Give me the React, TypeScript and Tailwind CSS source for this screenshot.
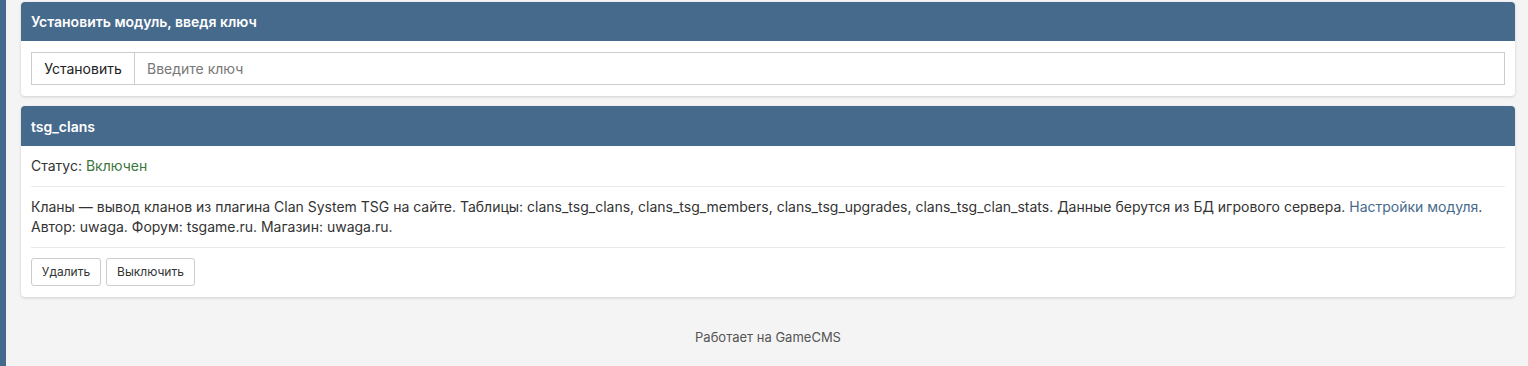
import React from "react";

export default function App() {
  return (
    <div
      className="flex min-h-[366px] bg-[#f4f4f4] text-[14px] text-[#333]"
      style={{ fontFamily: "Inter, 'Liberation Sans', sans-serif" }}
    >
      <div className="w-[6px] shrink-0 bg-[#466a8c]" />
      <div className="flex flex-1 flex-col pl-[15px] pr-[13px] pt-[2px]">
        <div className="rounded-[4px] bg-white shadow-[0_1px_3px_rgba(0,0,0,0.15)]">
          <div className="flex h-[39px] items-center rounded-t-[4px] bg-[#466a8c] px-[10px] text-[14px] font-semibold text-white">
            Установить модуль, введя ключ
          </div>
          <div className="px-[10px] py-[11px]">
            <div className="flex h-[33px] border border-[#ccc]">
              <button className="flex w-[103px] items-center justify-center border-r border-[#ccc] bg-white text-[14px] text-[#222]">
                Установить
              </button>
              <input
                className="flex-1 px-[12px] text-[14px] text-[#555] placeholder-[#777] outline-none"
                placeholder="Введите ключ"
              />
            </div>
          </div>
        </div>

        <div className="mt-[10px] rounded-[4px] bg-white shadow-[0_1px_3px_rgba(0,0,0,0.15)]">
          <div className="flex h-[40px] items-center rounded-t-[4px] bg-[#466a8c] px-[10px] text-[14px] font-semibold text-white">
            tsg_clans
          </div>
          <div className="px-[10px] pb-[11px] pt-[10px]">
            <div className="leading-[20px]">
              Статус: <span className="text-[#3c763d]">Включен</span>
            </div>
            <div className="my-[10px] h-px bg-[#eaeaea]" />
            <div className="leading-[20px]">
              Кланы — вывод кланов из плагина Clan System TSG на сайте. Таблицы: clans_tsg_clans, clans_tsg_members,
              clans_tsg_upgrades, clans_tsg_clan_stats. Данные берутся из БД игрового сервера.{" "}
              <a className="text-[#466a8c]">Настройки модуля</a>.
              <br />
              Автор: uwaga. Форум: tsgame.ru. Магазин: uwaga.ru.
            </div>
            <div className="my-[10px] h-px bg-[#eaeaea]" />
            <div className="flex gap-[5px]">
              <button className="h-[28px] w-[70px] rounded-[3px] border border-[#ccc] bg-white text-[12px] text-[#333]">
                Удалить
              </button>
              <button className="h-[28px] w-[89px] rounded-[3px] border border-[#ccc] bg-white text-[12px] text-[#333]">
                Выключить
              </button>
            </div>
          </div>
        </div>

        <div className="mt-[31px] text-center text-[13px] leading-[18px] text-[#555]">Работает на GameCMS</div>
      </div>
    </div>
  );
}
